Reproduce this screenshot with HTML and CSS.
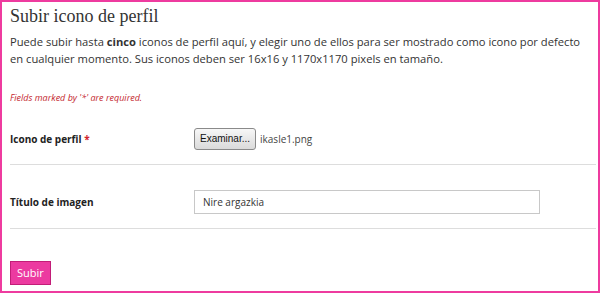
FILE: index.html
```html
<!DOCTYPE html>
<html lang="es">
<head>
    <meta charset="UTF-8">
    <title>Subir icono de perfil</title>
    <link rel="stylesheet" href="styles.css">
</head>
<body>
    <div class="frame">
        <h1 class="title">Subir icono de perfil</h1>
        <p class="intro">Puede subir hasta <strong>cinco</strong> iconos de perfil aquí, y elegir uno de ellos para ser mostrado como icono por defecto en cualquier momento. Sus iconos deben ser 16x16 y 1170x1170 pixels en tamaño.</p>
        <p class="required-note">Fields marked by '*' are required.</p>

        <form class="upload-form">
            <div class="form-row">
                <label class="form-label">Icono de perfil <span class="req">*</span></label>
                <div class="form-field">
                    <span class="file-btn">Examinar...</span>
                    <span class="file-name">ikasle1.png</span>
                </div>
            </div>
            <div class="form-row">
                <label class="form-label">Título de imagen</label>
                <div class="form-field">
                    <input class="text-input" type="text" value="Nire argazkia">
                </div>
            </div>
            <div class="actions">
                <button class="submit-btn" type="button">Subir</button>
            </div>
        </form>
    </div>
</body>
</html>
```

FILE: styles.css
```css
html, body {
    margin: 0;
    padding: 0;
    background: #fff;
}

.frame {
    box-sizing: border-box;
    width: 600px;
    height: 293px;
    border: 2px solid #ee3b9f;
    padding: 3px 2px 0 8px;
    font-family: "Open Sans", sans-serif;
    color: #333;
}

.title {
    margin: 0;
    font-family: "Liberation Serif", serif;
    font-weight: normal;
    font-size: 18px;
    line-height: 22px;
    color: #333;
}

.intro {
    margin: 6px 0 0;
    font-size: 11.2px;
    line-height: 17px;
    padding-right: 4px;
}

.required-note {
    margin: 24px 0 0;
    font-size: 9px;
    line-height: 13px;
    font-style: italic;
    color: #c4262e;
}

.upload-form {
    margin: 0;
}

.form-row {
    display: flex;
    align-items: center;
    padding: 25px 0 14px;
    border-bottom: 1px solid #ddd;
}

.form-row:first-child {
    padding-top: 24px;
}

.form-label {
    width: 184px;
    flex-shrink: 0;
    font-size: 10px;
    font-weight: bold;
    color: #222;
}

.req {
    color: #d0232b;
}

.form-field {
    display: flex;
    align-items: center;
}

.file-btn {
    box-sizing: border-box;
    height: 22px;
    padding: 0 5px;
    border: 1px solid #8a8a8a;
    border-radius: 3px;
    background: linear-gradient(#f7f7f7, #dadada);
    font-family: "Liberation Sans", sans-serif;
    font-size: 10px;
    line-height: 20px;
    color: #111;
}

.file-name {
    margin-left: 4px;
    font-size: 10px;
    color: #444;
}

.text-input {
    box-sizing: border-box;
    width: 346px;
    height: 24px;
    margin: 0;
    padding: 0 8px;
    border: 1px solid #c8c8c8;
    font-family: "Open Sans", sans-serif;
    font-size: 10px;
    color: #333;
}

.actions {
    padding-top: 31px;
}

.submit-btn {
    box-sizing: border-box;
    height: 24px;
    padding: 0 6px;
    border: 1px solid #c21d78;
    background: #ec3aa0;
    color: #fff;
    font-family: "Open Sans", sans-serif;
    font-size: 11px;
}
```
